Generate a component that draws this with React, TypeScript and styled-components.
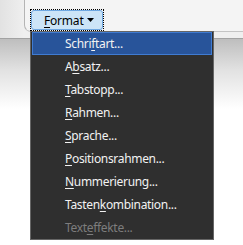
import React from "react";
import styled, { createGlobalStyle } from "styled-components";

const Global = createGlobalStyle`
  html, body { margin: 0; padding: 0; background: #ffffff; }
  body { font-family: "Noto Sans", "Open Sans", sans-serif; }
`;

const Screen = styled.div`
  position: relative;
  width: 243px;
  height: 245px;
  overflow: hidden;
  background: #ffffff;
`;

const Toolbar = styled.div`
  display: flex;
  height: 38px;
  background: #efefef;
  border-bottom: 1px solid #a2a2a2;
`;

const LeftStrip = styled.div`
  width: 24px;
  background: linear-gradient(to right, #e2e2e2, #efefef);
`;

const Group = styled.div`
  flex: 1;
  height: 32px;
  box-sizing: border-box;
  padding: 9px 0 0 5px;
  background: #f4f4f4;
  border-left: 1px solid #b4b4b4;
  border-bottom: 1px solid #c4c4c4;
  border-bottom-left-radius: 7px;
`;

const Shade = styled.div`
  height: 70px;
  background: linear-gradient(to bottom, #bebebe, #e2e2e2 45%, #ffffff);
`;

const FocusRing = styled.div`
  width: 74px;
  height: 22px;
  box-sizing: border-box;
  border: 1px dotted #000000;
`;

const MenuButton = styled.div`
  display: flex;
  align-items: center;
  height: 100%;
  box-sizing: border-box;
  padding-left: 12px;
  gap: 3px;
  background: #cce4f7;
  border: 1px solid #6fa7e0;
  border-radius: 3px;
  font-size: 12px;
  letter-spacing: -0.2px;
  color: #000000;
`;

const Key = styled.span`
  text-decoration: underline;
  text-underline-offset: 2px;
`;

const Menu = styled.div`
  position: absolute;
  left: 30px;
  top: 31px;
  width: 184px;
  box-sizing: border-box;
  border: 1px solid #666666;
  background: #2f2f2f;
  display: flex;
  flex-direction: column;
`;

const Item = styled.div<{ $active?: boolean; $disabled?: boolean }>`
  height: 23px;
  line-height: 21px;
  box-sizing: border-box;
  margin: 0 1px;
  padding-left: 32px;
  font-size: 12px;
  letter-spacing: -0.32px;
  white-space: nowrap;
  color: ${(p) => (p.$disabled ? "#7d7d7d" : "#f2f2f2")};
  background: ${(p) => (p.$active ? "#28549a" : "transparent")};
  border: 1px solid ${(p) => (p.$active ? "#3f7bd2" : "transparent")};
`;

type Entry = { pre: string; key: string; post: string; active?: boolean; disabled?: boolean };

const entries: Entry[] = [
  { pre: "Schri", key: "f", post: "tart...", active: true },
  { pre: "A", key: "b", post: "satz..." },
  { pre: "", key: "T", post: "abstopp..." },
  { pre: "", key: "R", post: "ahmen..." },
  { pre: "", key: "S", post: "prache..." },
  { pre: "", key: "P", post: "ositionsrahmen..." },
  { pre: "", key: "N", post: "ummerierung..." },
  { pre: "Tasten", key: "k", post: "ombination..." },
  { pre: "Text", key: "e", post: "ffekte...", disabled: true },
];

export default function App() {
  return (
    <>
      <Global />
      <Screen>
        <Toolbar>
          <LeftStrip />
          <Group>
            <FocusRing>
              <MenuButton>
                <span>
                  <Key>F</Key>ormat
                </span>
                <svg width="7" height="4" viewBox="0 0 7 4">
                  <path d="M0 0H7L3.5 4Z" fill="#000" />
                </svg>
              </MenuButton>
            </FocusRing>
          </Group>
        </Toolbar>
        <Shade />
        <Menu>
          {entries.map((e) => (
            <Item key={e.pre + e.key + e.post} $active={e.active} $disabled={e.disabled}>
              {e.pre}
              <Key>{e.key}</Key>
              {e.post}
            </Item>
          ))}
        </Menu>
      </Screen>
    </>
  );
}
